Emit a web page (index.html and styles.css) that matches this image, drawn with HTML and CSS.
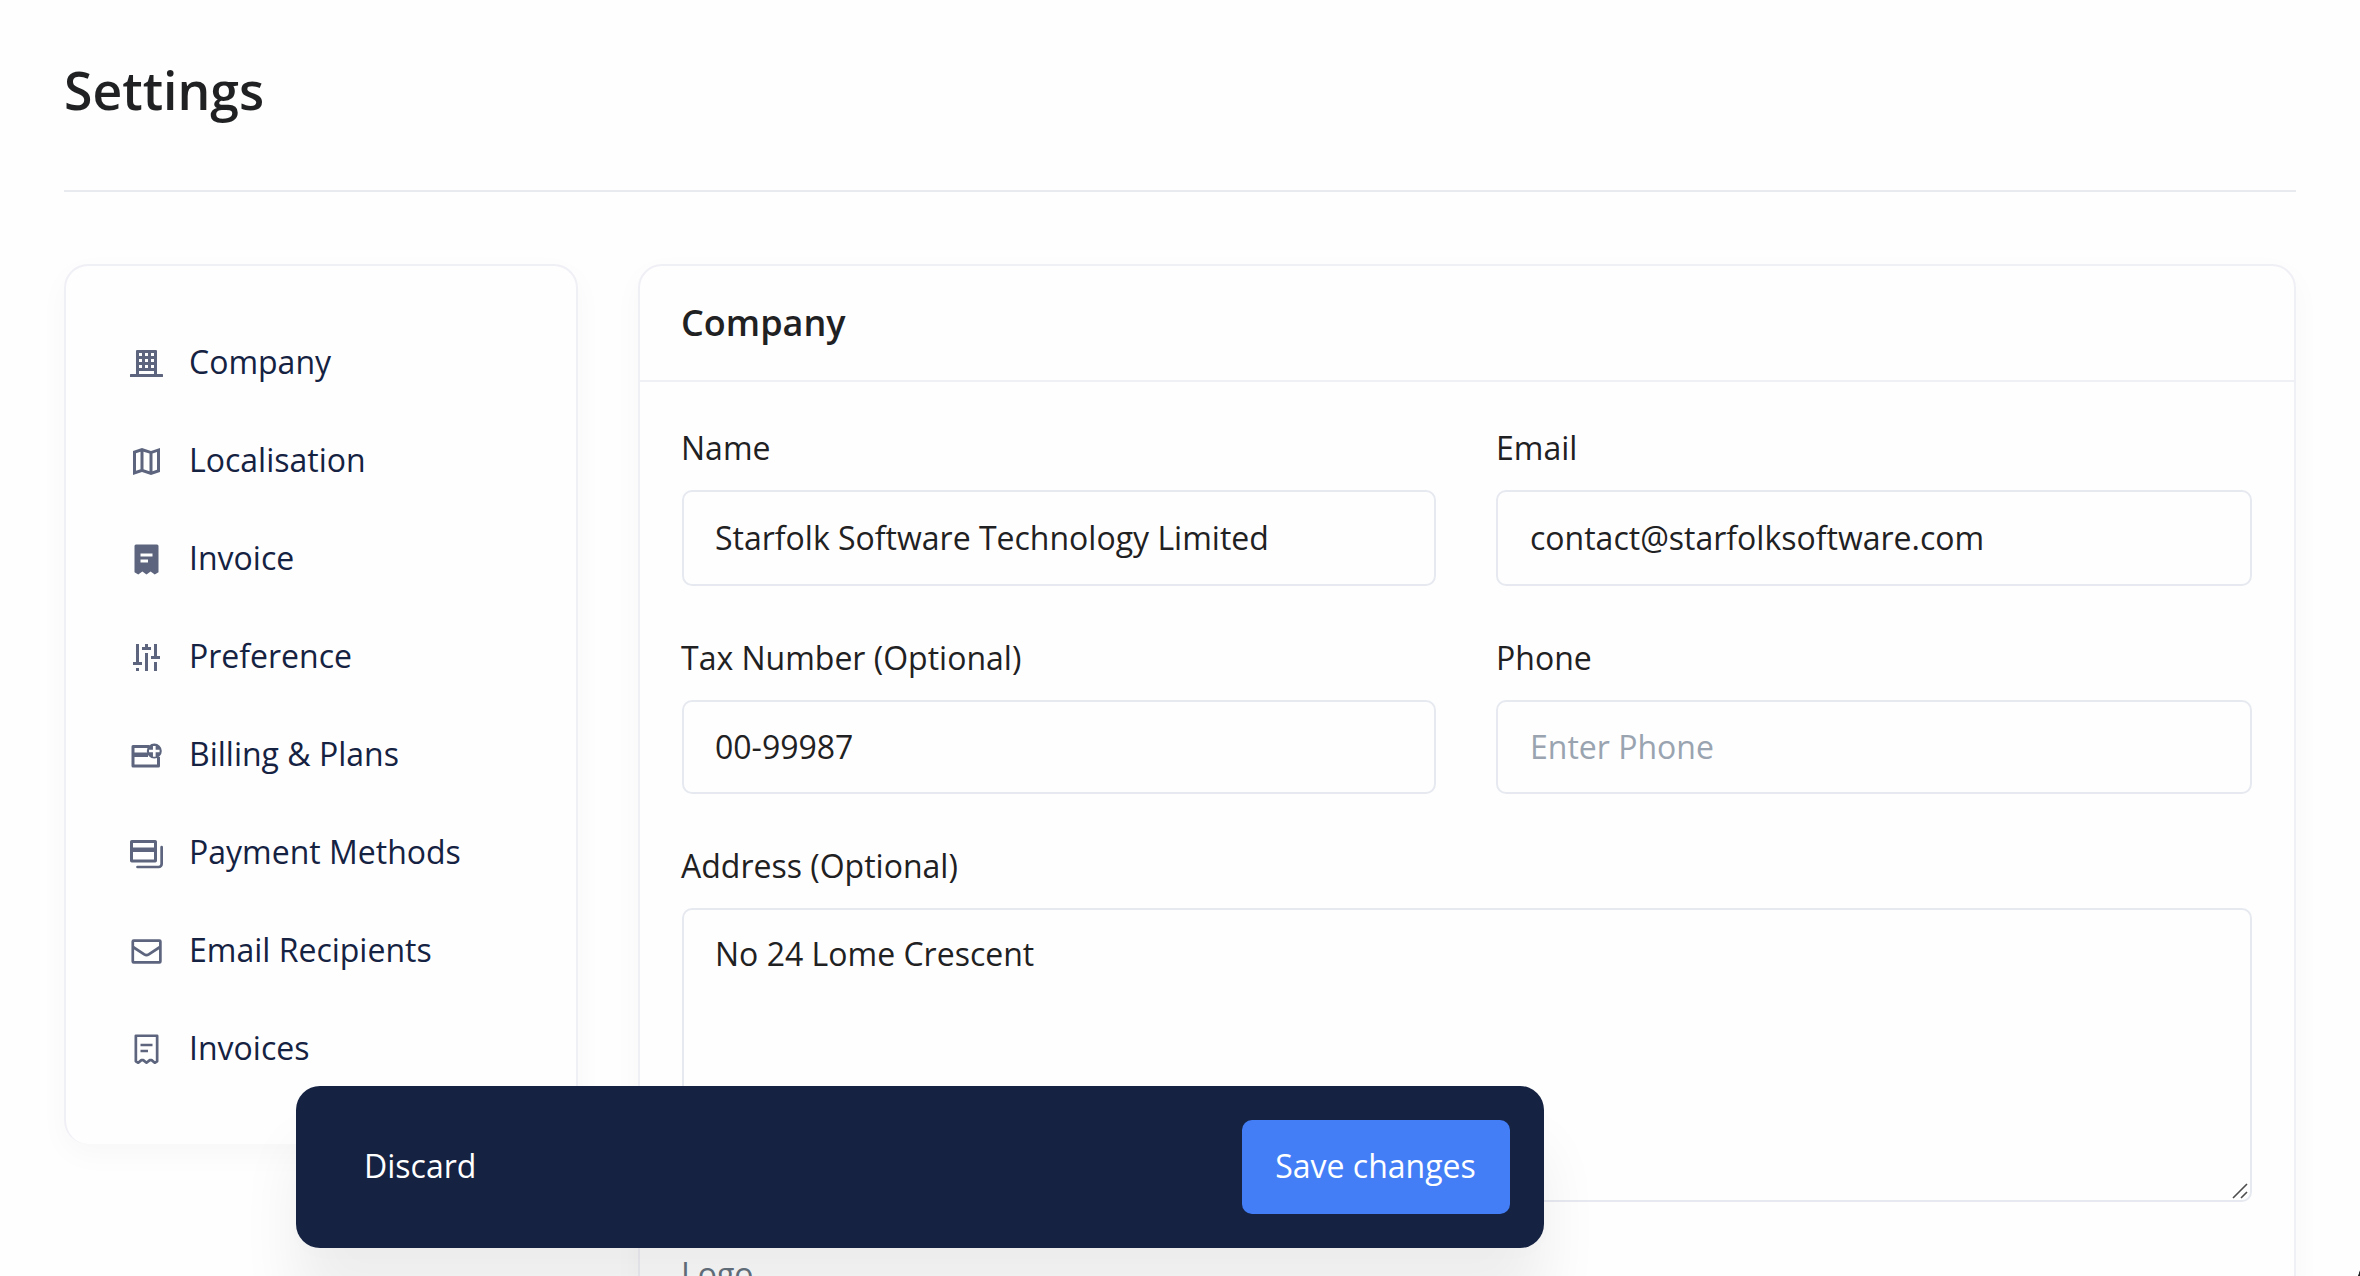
FILE: index.html
```html
<!DOCTYPE html>
<html lang="en">
<head>
<meta charset="utf-8">
<title>Settings</title>
<link rel="stylesheet" href="styles.css">
</head>
<body>
<div class="page">
  <header class="page-header"><h1>Settings</h1></header>
  <div class="layout">
    <nav class="card sidebar">
      <a class="nav-item"><svg class="icon" viewBox="-.3333 -.3333 24 24"><path fill-rule="evenodd" d="M5.7 3h12.6a.7.7 0 0 1 .7.7V19h3.6a.4.4 0 0 1 .4.4v1.2a.4.4 0 0 1-.4.4H1.400a.4.4 0 0 1-.4-.4v-1.200a.4.4 0 0 1 .4-.4H5V3.700a.7.7 0 0 1 .7-.7zM7 5v2h2V5zm4 0v2h2V5zm4 0v2h2V5zM7 9v2h2V9zm4 0v2h2V9zm4 0v2h2V9zM7 13v2h2v-2zm4 0v2h2v-2zm4 0v2h2v-2zM7 17v2h10v-2z"/></svg><span>Company</span></a>
      <a class="nav-item"><svg class="icon" viewBox="-.3333 -.3333 24 24"><path fill-rule="evenodd" d="M3 5l6-2 6 2 6-2v16l-6 2-6-2-6 2zm2 1.450v11.800l3-1V5.450zm5-1v11.800l4 1.300V6.750zm6 1.300v11.800l3-1V5.750z"/></svg><span>Localisation</span></a>
      <a class="nav-item"><svg class="icon" viewBox="-.3333 -.3333 24 24"><path fill-rule="evenodd" d="M5 2h14a1 1 0 0 1 1 1v17.500L17.500 22l-2.750-2L12 22l-2.750-2L6.500 22 4 20.500V3a1 1 0 0 1 1-1zm3 6v2h8V8zm0 4v2h5v-2z"/></svg><span>Invoice</span></a>
      <a class="nav-item"><svg class="icon" viewBox="-.3333 -.3333 24 24"><path d="M5 3h2v12h2v2H3v-2h2zM5 19h2v2H5zM11 3h2v2h2v2H9V5h2zM11 9h2v12h-2zM17 3h2v8h2v2h-6v-2h2zM17 15h2v6h-2z"/></svg><span>Preference</span></a>
      <a class="nav-item"><svg class="icon" viewBox="-.3333 -.3333 24 24"><path fill-rule="evenodd" d="M3 5h11v2H4v3h9v3H4v5h15v-5h2v6a1 1 0 0 1-1 1H3a1 1 0 0 1-1-1V6a1 1 0 0 1 1-1z"/><path fill-rule="evenodd" d="M17.200 4a5 5 0 1 1 0 10 5 5 0 0 1 0-10zm-.9 1.700v2.400H13.700v1.800h2.600v3h1.800v-3h2.600V8.100h-2.600V5.700z"/></svg><span>Billing &amp; Plans</span></a>
      <a class="nav-item"><svg class="icon" viewBox="-.3333 -.3333 24 24"><path fill-rule="evenodd" d="M2.200 3h15.600A1.200 1.200 0 0 1 19 4.200v12.600a1.200 1.200 0 0 1-1.200 1.200H2.200A1.200 1.200 0 0 1 1 16.800V4.200A1.200 1.200 0 0 1 2.200 3zM3 5v3h14V5zm0 6v5h14v-5z"/><path d="M22.100 7.800V19a2 2 0 0 1-2 2H6" fill="none" stroke="currentColor" stroke-width="1.800" stroke-linecap="round"/></svg><span>Payment Methods</span></a>
      <a class="nav-item"><svg class="icon" viewBox="-.3333 -.3333 24 24"><g fill="none" stroke="currentColor" stroke-width="1.800" stroke-linejoin="round"><rect x="2.850" y="4.700" width="18.400" height="14.600" rx=".6"/><path d="M3 9l7.500 4.900q1.500.9 3 0L21 9"/></g></svg><span>Email Recipients</span></a>
      <a class="nav-item"><svg class="icon" viewBox="-.3333 -.3333 24 24"><path d="M4.900 2.850h14.200V19.900l-1.600.9-2.100-1.700h-1.200L12 20.800l-2.200-1.700H8.600l-2.100 1.700-1.600-.9z" fill="none" stroke="currentColor" stroke-width="1.800" stroke-linejoin="round"/><path d="M8 8.100h8v1.800H8zM8 12.100h5v1.800H8z"/></svg><span>Invoices</span></a>
    </nav>
    <main class="card main">
      <h2 class="card-title">Company</h2>
      <form class="form">
        <label class="field"><span class="label">Name</span><input class="control tall" type="text" value="Starfolk Software Technology Limited"></label>
        <label class="field second"><span class="label">Email</span><input class="control tall" type="text" value="contact@starfolksoftware.com"></label>
        <label class="field"><span class="label">Tax Number (Optional)</span><input class="control" type="text" value="00-99987"></label>
        <label class="field second"><span class="label">Phone</span><input class="control" type="text" placeholder="Enter Phone"></label>
        <label class="field wide"><span class="label">Address (Optional)</span><span class="area-wrap"><textarea class="control area">No 24 Lome Crescent</textarea><svg class="grip" viewBox="0 0 16 16"><path d="M1 15L15 1M9 15l6-6"/></svg></span></label>
        <div class="field wide"><span class="label muted">Logo</span></div>
      </form>
    </main>
  </div>
</div>
<div class="action-bar">
  <button class="discard" type="button">Discard</button>
  <button class="save" type="button">Save changes</button>
</div>
<div class="window-corner"></div>
</body>
</html>
```
FILE: styles.css
```css
* { box-sizing: border-box; }

body {
  margin: 0;
  height: 1276px;
  overflow: hidden;
  background: #fefefe;
  color: #1f2122;
  font: 32px/48px "Open Sans", sans-serif;
}

.page {
  height: 1276px;
  padding: 0 64px;
  overflow: hidden;
}

.page-header {
  height: 192px;
  padding-top: 55px;
  border-bottom: 2px solid #e7eaee;
}

h1, h2 { margin: 0; font-weight: 600; }
h1 { font-size: 51.7px; line-height: 70px; }

.layout {
  display: grid;
  grid-template-columns: 514px 1658px;
  gap: 60px;
  align-items: start;
  padding-top: 72px;
}

.card {
  background: #fefefe;
  border: 2px solid #efeff6;
  border-radius: 24px;
  box-shadow: 0 10px 30px rgba(0, 0, 0, 0.03);
}

.sidebar {
  display: flex;
  flex-direction: column;
  height: 880px;
  padding: 48px 62px 0;
  border-bottom: 0;
}

.nav-item {
  flex: none;
  display: flex;
  align-items: center;
  gap: 25px;
  height: 98px;
  color: #152242;
}

.nav-item span { padding-bottom: 2px; }

.icon {
  flex: none;
  width: 36px;
  height: 36px;
  fill: currentColor;
  color: #5d657e;
}

.main { height: 1036px; }

.card-title {
  height: 116px;
  padding: 32px 41px;
  border-bottom: 2px solid #efeff6;
  font-size: 36px;
  line-height: 50px;
}

.form {
  display: grid;
  grid-template-columns: 754px 756px;
  column-gap: 60px;
  row-gap: 48px;
  padding: 42px;
}

.field { display: flex; flex-direction: column; gap: 18px; }
.wide { grid-column: 1 / -1; }
.label { margin-left: -1px; }
.muted { color: #667280; }

.control {
  width: 100%;
  height: 94px;
  padding: 0 31px 2px;
  border: 2px solid #e6e9f0;
  border-radius: 10px;
  outline: 0;
  background: #fefefe;
  color: inherit;
  font: inherit;
}

.tall { height: 96px; }
.second .label { margin-left: 0; }
.second .control { padding-left: 32px; }
.control::placeholder { color: #99a4b0; opacity: 1; }

.area-wrap { position: relative; display: flex; }

.area {
  height: 294px;
  padding: 20px 31px;
  resize: none;
}

.grip {
  position: absolute;
  right: 4px;
  bottom: 3px;
  width: 16px;
  height: 16px;
  fill: none;
  stroke: #4d4d4d;
  stroke-width: 1.6;
}

.action-bar {
  position: absolute;
  left: 296px;
  top: 1086px;
  display: flex;
  justify-content: space-between;
  align-items: center;
  width: 1248px;
  height: 162px;
  padding: 34px;
  border-radius: 24px;
  background: #152242;
  box-shadow: 0 60px 60px rgba(0, 0, 0, 0.066), 0 6px 24px rgba(0, 0, 0, 0.012);
}

.action-bar button {
  height: 94px;
  padding: 0 34px 3px;
  border: 0;
  border-radius: 10px;
  background: none;
  color: #fff;
  font: inherit;
}

.action-bar .save { width: 268px; padding: 0 1px 3px 0; background: #437ef7; }

/* Dark edge of the window's rounded corner */
.window-corner {
  position: absolute;
  right: 0;
  bottom: 0;
  width: 2px;
  height: 6px;
  background: linear-gradient(to bottom right, transparent 40%, #222 60%);
}
```
